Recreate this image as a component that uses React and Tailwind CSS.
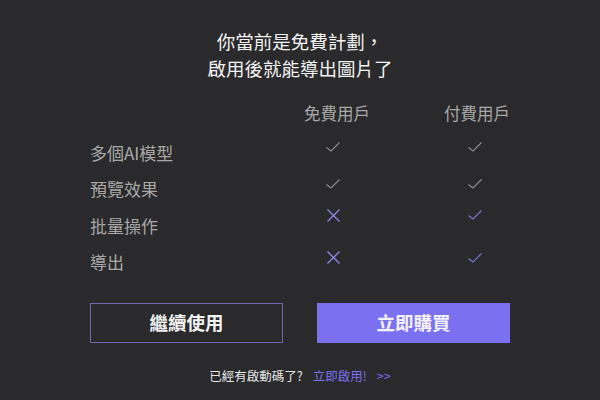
import React from 'react';

const rows = [
  { label: '多個AI模型', free: true, paid: 'gray', shift: '-translate-y-[5px]' },
  { label: '預覽效果', free: true, paid: 'gray', shift: '-translate-y-[5px]' },
  { label: '批量操作', free: false, paid: 'purple', shift: '-translate-y-[10px]' },
  { label: '導出', free: false, paid: 'purple', shift: '-translate-y-[4px]' },
];

const Check = ({ purple }) => (
  <svg width="16" height="12" viewBox="0 0 16 12" fill="none">
    <path d="M1.5 6.5 L6 10 L14.5 1.5" stroke={purple ? '#7c74d6' : '#8c8c8c'} strokeWidth="1.2" />
  </svg>
);

const Cross = () => (
  <svg width="15" height="15" viewBox="0 0 15 15" fill="none">
    <path d="M1.5 1.5 L13.5 13.5 M13.5 1.5 L1.5 13.5" stroke="#8d85e6" strokeWidth="1.4" />
  </svg>
);

const App = () => {
  return (
    <div
      className="w-[600px] h-[400px] bg-[#2a2a2c] flex flex-col items-center overflow-hidden"
      style={{ fontFamily: '"Noto Sans CJK TC", "Noto Sans", sans-serif' }}
    >
      <div className="mt-[28px] text-[18.5px] leading-[27px] text-[#f2f2f2] text-center">
        <p>你當前是免費計劃，</p>
        <p>啟用後就能導出圖片了</p>
      </div>

      <div className="mt-[16px] self-start ml-[90px] grid grid-cols-[177px_140px_140px] text-[#a8a8a8]">
        <div className="h-[36px]" />
        <div className="h-[36px] pb-[6px] flex items-center justify-center text-[16.5px]">免費用戶</div>
        <div className="h-[36px] pb-[6px] flex items-center justify-center text-[16.5px]">付費用戶</div>
        {rows.map((row) => (
          <React.Fragment key={row.label}>
            <div className="h-[36.5px] flex items-center text-[17px]">{row.label}</div>
            <div className={`h-[36.5px] flex items-center justify-center -translate-x-1 ${row.shift}`}>
              {row.free ? <Check /> : <Cross />}
            </div>
            <div className={`h-[36.5px] flex items-center justify-center -translate-x-0.5 ${row.shift}`}>
              <Check purple={row.paid === 'purple'} />
            </div>
          </React.Fragment>
        ))}
      </div>

      <div className="mt-[23px] flex gap-[34px]">
        <button className="w-[193px] h-[40px] border border-[#6f69b4] text-[#f2f2f2] text-[18.5px] font-bold">
          繼續使用
        </button>
        <button className="w-[193px] h-[40px] bg-[#7a70f0] text-[#f4f2ff] text-[18.5px] font-bold">
          立即購買
        </button>
      </div>

      <div className="mt-[24px] text-[12.5px] leading-[18px] flex gap-[10px]">
        <span className="text-[#e6e6e6]">已經有啟動碼了?</span>
        <span className="text-[#7a70f0] flex gap-[10px]">
          <span>立即啟用!</span>
          <span>&gt;&gt;</span>
        </span>
      </div>
    </div>
  );
};

export default App;
